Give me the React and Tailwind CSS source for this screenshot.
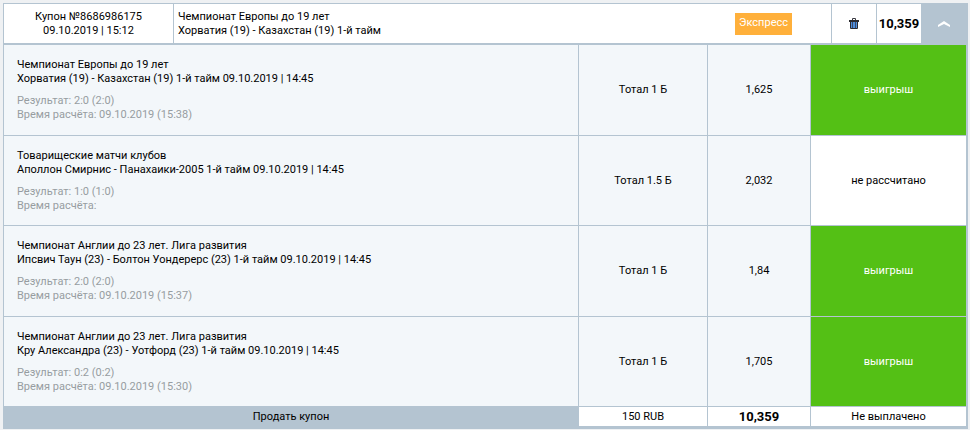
const bets = [
  {
    league: 'Чемпионат Европы до 19 лет',
    match: 'Хорватия (19) - Казахстан (19) 1-й тайм 09.10.2019 | 14:45',
    score: '2:0 (2:0)',
    settled: '09.10.2019 (15:38)',
    pick: 'Тотал 1 Б',
    odds: '1,625',
    won: true,
  },
  {
    league: 'Товарищеские матчи клубов',
    match: 'Аполлон Смирнис - Панахаики-2005 1-й тайм 09.10.2019 | 14:45',
    score: '1:0 (1:0)',
    settled: '',
    pick: 'Тотал 1.5 Б',
    odds: '2,032',
    won: false,
  },
  {
    league: 'Чемпионат Англии до 23 лет. Лига развития',
    match: 'Ипсвич Таун (23) - Болтон Уондерерс (23) 1-й тайм 09.10.2019 | 14:45',
    score: '2:0 (2:0)',
    settled: '09.10.2019 (15:37)',
    pick: 'Тотал 1 Б',
    odds: '1,84',
    won: true,
  },
  {
    league: 'Чемпионат Англии до 23 лет. Лига развития',
    match: 'Кру Александра (23) - Уотфорд (23) 1-й тайм 09.10.2019 | 14:45',
    score: '0:2 (0:2)',
    settled: '09.10.2019 (15:30)',
    pick: 'Тотал 1 Б',
    odds: '1,705',
    won: true,
  },
]

function TrashIcon() {
  return (
    <svg width="10" height="11" viewBox="0 0 10 11" aria-hidden="true">
      <path d="M3.5 2V0.5h3V2" fill="none" stroke="#3a3a42" />
      <path d="M0 2h10v2H0z" fill="#2b2b30" />
      <path d="M1 3h8v7a1 1 0 0 1-1 1H2a1 1 0 0 1-1-1z" fill="#2b2b30" />
      <path d="M2 4h6v6H2z" fill="#4f8fdc" />
      <path d="M3.5 4v6M6.5 4v6" stroke="#3d4a68" />
    </svg>
  )
}

function CaretIcon() {
  return (
    <svg width="12" height="6" viewBox="0 0 12 6" aria-hidden="true">
      <path d="M0 4L6 0l6 4v2L6 3 0 6z" fill="#fff" />
    </svg>
  )
}

function CouponHeader() {
  return (
    <div className="flex h-[41px] border-b-2 border-[#b4c4d1] bg-white">
      <div className="flex w-[170px] shrink-0 flex-col justify-center border-r border-[#b4c4d1] text-center">
        <div>Купон №8686986175</div>
        <div>09.10.2019 | 15:12</div>
      </div>
      <div className="flex flex-1 items-center justify-between pr-[39px] pl-1">
        <div>
          <div>Чемпионат Европы до 19 лет</div>
          <div>Хорватия (19) - Казахстан (19) 1-й тайм</div>
        </div>
        <span className="bg-[#ffb03b] px-1 pt-[3px] pb-[5px] text-white">Экспресс</span>
      </div>
      <button type="button" aria-label="Удалить" className="flex w-[46px] items-center justify-center border-x border-[#b4c4d1]">
        <TrashIcon />
      </button>
      <div className="flex w-[44px] items-center justify-center text-[13px] font-bold">10,359</div>
      <button type="button" aria-label="Свернуть" className="flex w-[45px] items-center justify-center bg-[#b4c4d1]">
        <CaretIcon />
      </button>
    </div>
  )
}

function BetRow({ bet }) {
  return (
    <tr className="odd:h-[91px] even:h-[90px]">
      <td className="border-r border-[#b4c4d1] pl-[13px]">
        <div>{bet.league}</div>
        <div>{bet.match}</div>
        <div className="mt-2 text-[#979da1]">Результат: {bet.score}</div>
        <div className="text-[#979da1]">Время расчёта: {bet.settled}</div>
      </td>
      <td className="border-r border-[#b4c4d1] text-center">{bet.pick}</td>
      <td className="border-r border-[#b4c4d1] text-center">{bet.odds}</td>
      <td className={`text-center ${bet.won ? 'bg-[#54c015] text-white' : 'bg-white'}`}>
        {bet.won ? 'выигрыш' : 'не рассчитано'}
      </td>
    </tr>
  )
}

export default function App() {
  return (
    <div className="min-h-screen bg-[#eff1f3] pt-[3px] pr-0.5 pl-[3px] font-['Roboto','Liberation_Sans',sans-serif] text-[11px] leading-[14px] text-black">
      <div className="border-t border-r-2 border-b-[3px] border-l border-[#b4c4d1]">
        <CouponHeader />
        <table className="w-full table-fixed border-separate border-spacing-0 bg-[#f3f7fa] [&_tbody_td]:border-b">
          <colgroup>
            <col />
            <col className="w-[129px]" />
            <col className="w-[103px]" />
            <col className="w-[155px]" />
          </colgroup>
          <tbody className="[&_td]:border-[#b4c4d1]">
            {bets.map((bet) => (
              <BetRow key={bet.match} bet={bet} />
            ))}
          </tbody>
          <tfoot>
            <tr className="h-[19px] bg-white text-center">
              <td className="border-r border-[#b4c4d1] bg-[#b4c4d1]">
                <button type="button" className="block w-full">Продать купон</button>
              </td>
              <td className="border-r border-[#b4c4d1]">150 RUB</td>
              <td className="border-r border-[#b4c4d1] text-[13px] font-bold">10,359</td>
              <td>Не выплачено</td>
            </tr>
          </tfoot>
        </table>
      </div>
    </div>
  )
}
